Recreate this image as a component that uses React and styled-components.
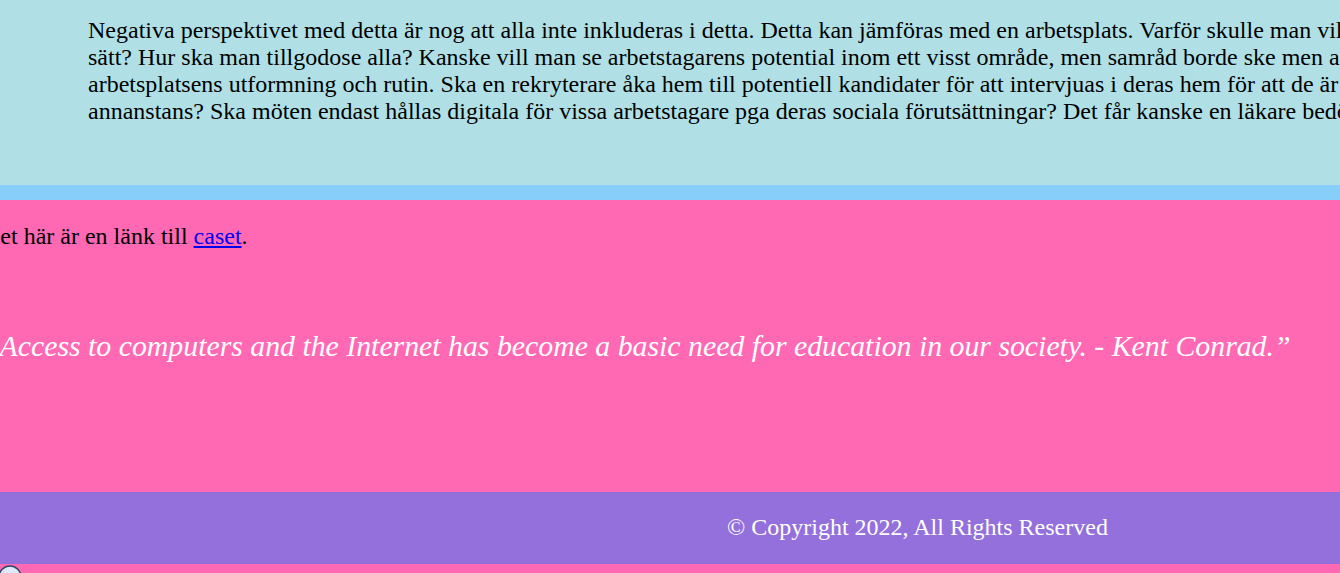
import React from 'react';
import styled, { createGlobalStyle } from 'styled-components';

const GlobalStyle = createGlobalStyle`
  html, body {
    margin: 0;
    padding: 0;
    overflow: hidden;
    background-color: #ff69b4;
    font-family: "Liberation Serif", "Times New Roman", serif;
  }
`;

const Page = styled.div`
  display: flex;
  flex-direction: column;
  width: 1340px;
`;

const Intro = styled.section`
  background-color: #b0e0e6;
  height: 185px;
  box-sizing: border-box;
  padding: 17px 0 0 88px;
  overflow: hidden;
`;

const Paragraph = styled.p`
  margin: 0;
  font-size: 24px;
  line-height: 27px;
  color: #000;
  white-space: nowrap;
`;

const Divider = styled.div`
  height: 15px;
  background-color: #87cefa;
`;

const CaseSection = styled.section`
  background-color: #ff69b4;
  height: 292px;
  box-sizing: border-box;
  padding-top: 23px;
  display: flex;
  flex-direction: column;
  overflow: hidden;
`;

const LinkLine = styled.p`
  margin: 0;
  font-size: 24px;
  line-height: 27px;
  text-indent: -17px;
  white-space: nowrap;
  color: #000;

  a {
    color: #0000ee;
    text-decoration: underline;
  }
`;

const Quote = styled.blockquote`
  margin: 79px 0 0 0;
  font-size: 29.8px;
  line-height: 34px;
  font-style: italic;
  color: #fff;
  text-indent: -17px;
  white-space: nowrap;
`;

const Footer = styled.footer`
  background-color: #9370db;
  height: 72px;
  box-sizing: border-box;
  padding: 22px 0 0 727px;
  color: #fff;
  font-size: 24px;
  white-space: nowrap;
`;

const Below = styled.div`
  height: 9px;
  background-color: #ff69b4;
  overflow: hidden;
  padding-top: 1px;
`;

const Badge = () => (
  <svg width="24" height="24" viewBox="0 0 24 24">
    <ellipse cx="10" cy="12" rx="11" ry="11" fill="#dfe8f5" stroke="#2b4a6e" strokeWidth="1.6" />
  </svg>
);

const lines = [
  'Negativa perspektivet med detta är nog att alla inte inkluderas i detta. Detta kan jämföras med en arbetsplats. Varför skulle man vilja anställa någon på samma',
  'sätt? Hur ska man tillgodose alla? Kanske vill man se arbetstagarens potential inom ett visst område, men samråd borde ske men anpassa',
  'arbetsplatsens utformning och rutin. Ska en rekryterare åka hem till potentiell kandidater för att intervjuas i deras hem för att de är rädda för',
  'annanstans? Ska möten endast hållas digitala för vissa arbetstagare pga deras sociala förutsättningar? Det får kanske en läkare bedöma.',
];

export default function App() {
  return (
    <>
      <GlobalStyle />
      <Page>
        <Intro>
          <Paragraph>
            {lines.map((line, i) => (
              <React.Fragment key={i}>
                {line}
                {i < lines.length - 1 && <br />}
              </React.Fragment>
            ))}
          </Paragraph>
        </Intro>
        <Divider />
        <CaseSection>
          <LinkLine>
            Det här är en länk till <a href="#caset">caset</a>.
          </LinkLine>
          <Quote>
            “Access to computers and the Internet has become a basic need for education in our society. - Kent Conrad.”
          </Quote>
        </CaseSection>
        <Footer>© Copyright 2022, All Rights Reserved</Footer>
        <Below>
          <Badge />
        </Below>
      </Page>
    </>
  );
}
